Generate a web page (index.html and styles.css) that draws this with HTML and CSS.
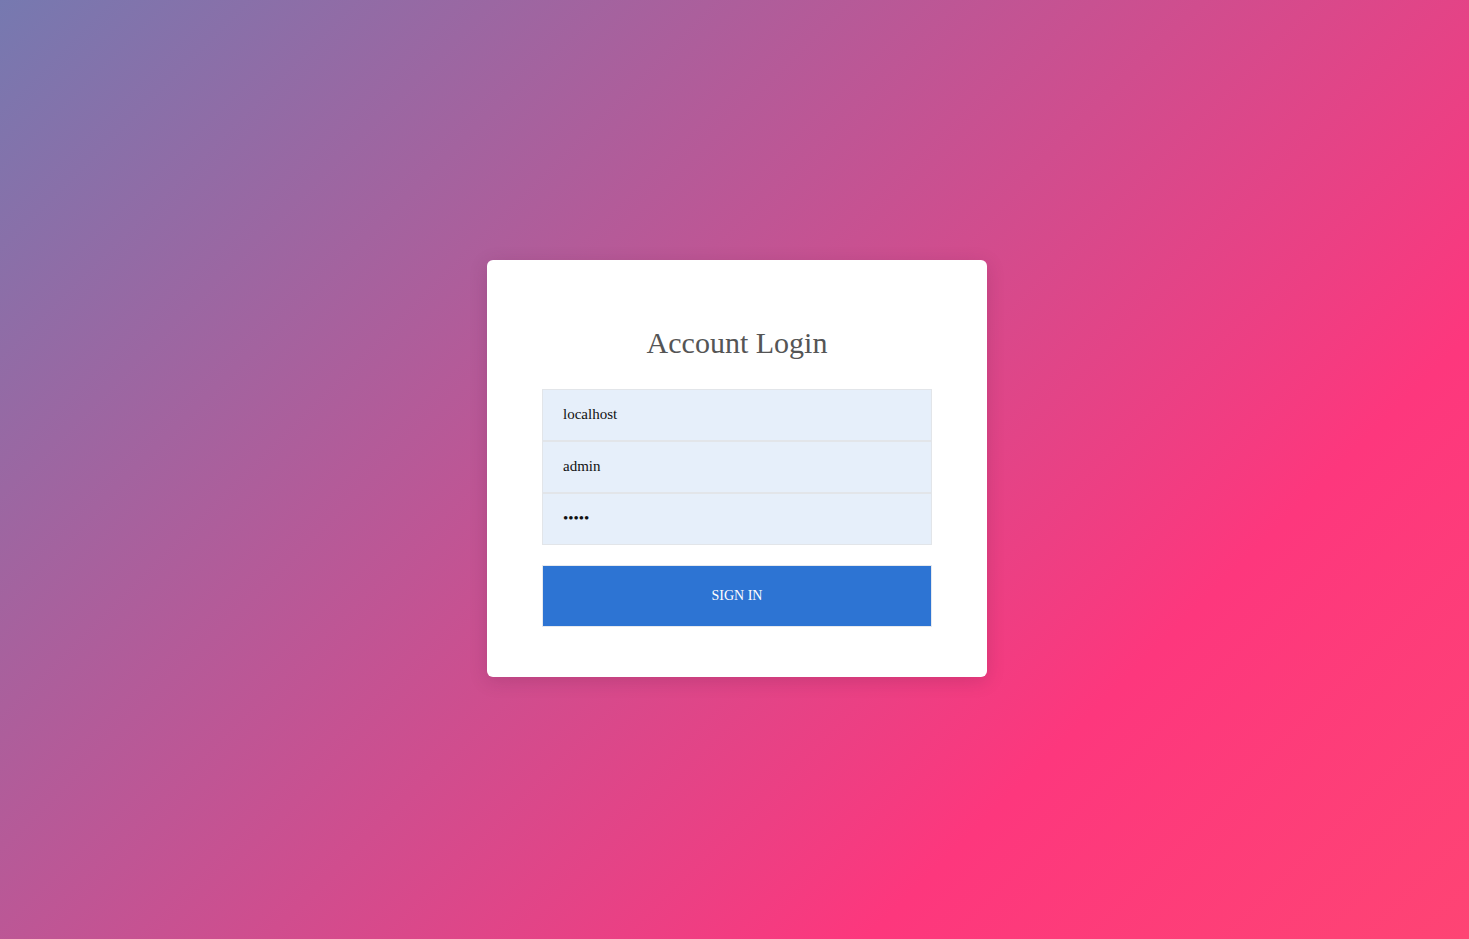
FILE: index.html
```html
<!DOCTYPE html>
<html lang="en">
<head>
<meta charset="utf-8">
<title>Account Login</title>
<link rel="stylesheet" href="styles.css">
</head>
<body>
<div class="page">
  <form class="card">
    <h1 class="title">Account Login</h1>
    <div class="fields">
      <input class="field" type="text" value="localhost">
      <input class="field" type="text" value="admin">
      <input class="field" type="password" value="admin">
    </div>
    <button class="submit" type="button">SIGN IN</button>
  </form>
</div>
</body>
</html>
```

FILE: styles.css
```css
html, body {
  margin: 0;
  height: 100%;
}

body {
  font-family: "Liberation Serif", "Times New Roman", serif;
  background: linear-gradient(135deg, #7679b0 0%, #fd377d 75%, #fe4474 100%);
}

.page {
  height: 100%;
  box-sizing: border-box;
  padding: 0 0 2px 5px;
  display: flex;
  align-items: center;
  justify-content: center;
}

.card {
  width: 500px;
  box-sizing: border-box;
  padding: 66px 55px 50px;
  background: #fff;
  border-radius: 6px;
  box-shadow: 0 4px 18px rgba(80, 20, 60, 0.18);
}

.title {
  margin: 0 0 29px;
  font-size: 30px;
  line-height: 34px;
  font-weight: normal;
  text-align: center;
  color: #555;
}

.fields {
  display: flex;
  flex-direction: column;
}

.field {
  display: block;
  width: 100%;
  height: 52px;
  box-sizing: border-box;
  margin: 0;
  padding: 0 20px 2px;
  border: 1px solid #e2e5e9;
  background: #e6effa;
  font-family: "Liberation Serif", "Times New Roman", serif;
  font-size: 15px;
  color: #111;
  outline: none;
}

.submit {
  display: block;
  width: 100%;
  height: 62px;
  margin-top: 20px;
  box-sizing: border-box;
  border: 1px solid #e6e9ee;
  background: #2d74d3;
  color: #fff;
  font-family: "Liberation Serif", "Times New Roman", serif;
  font-size: 14px;
  cursor: pointer;
}
```
